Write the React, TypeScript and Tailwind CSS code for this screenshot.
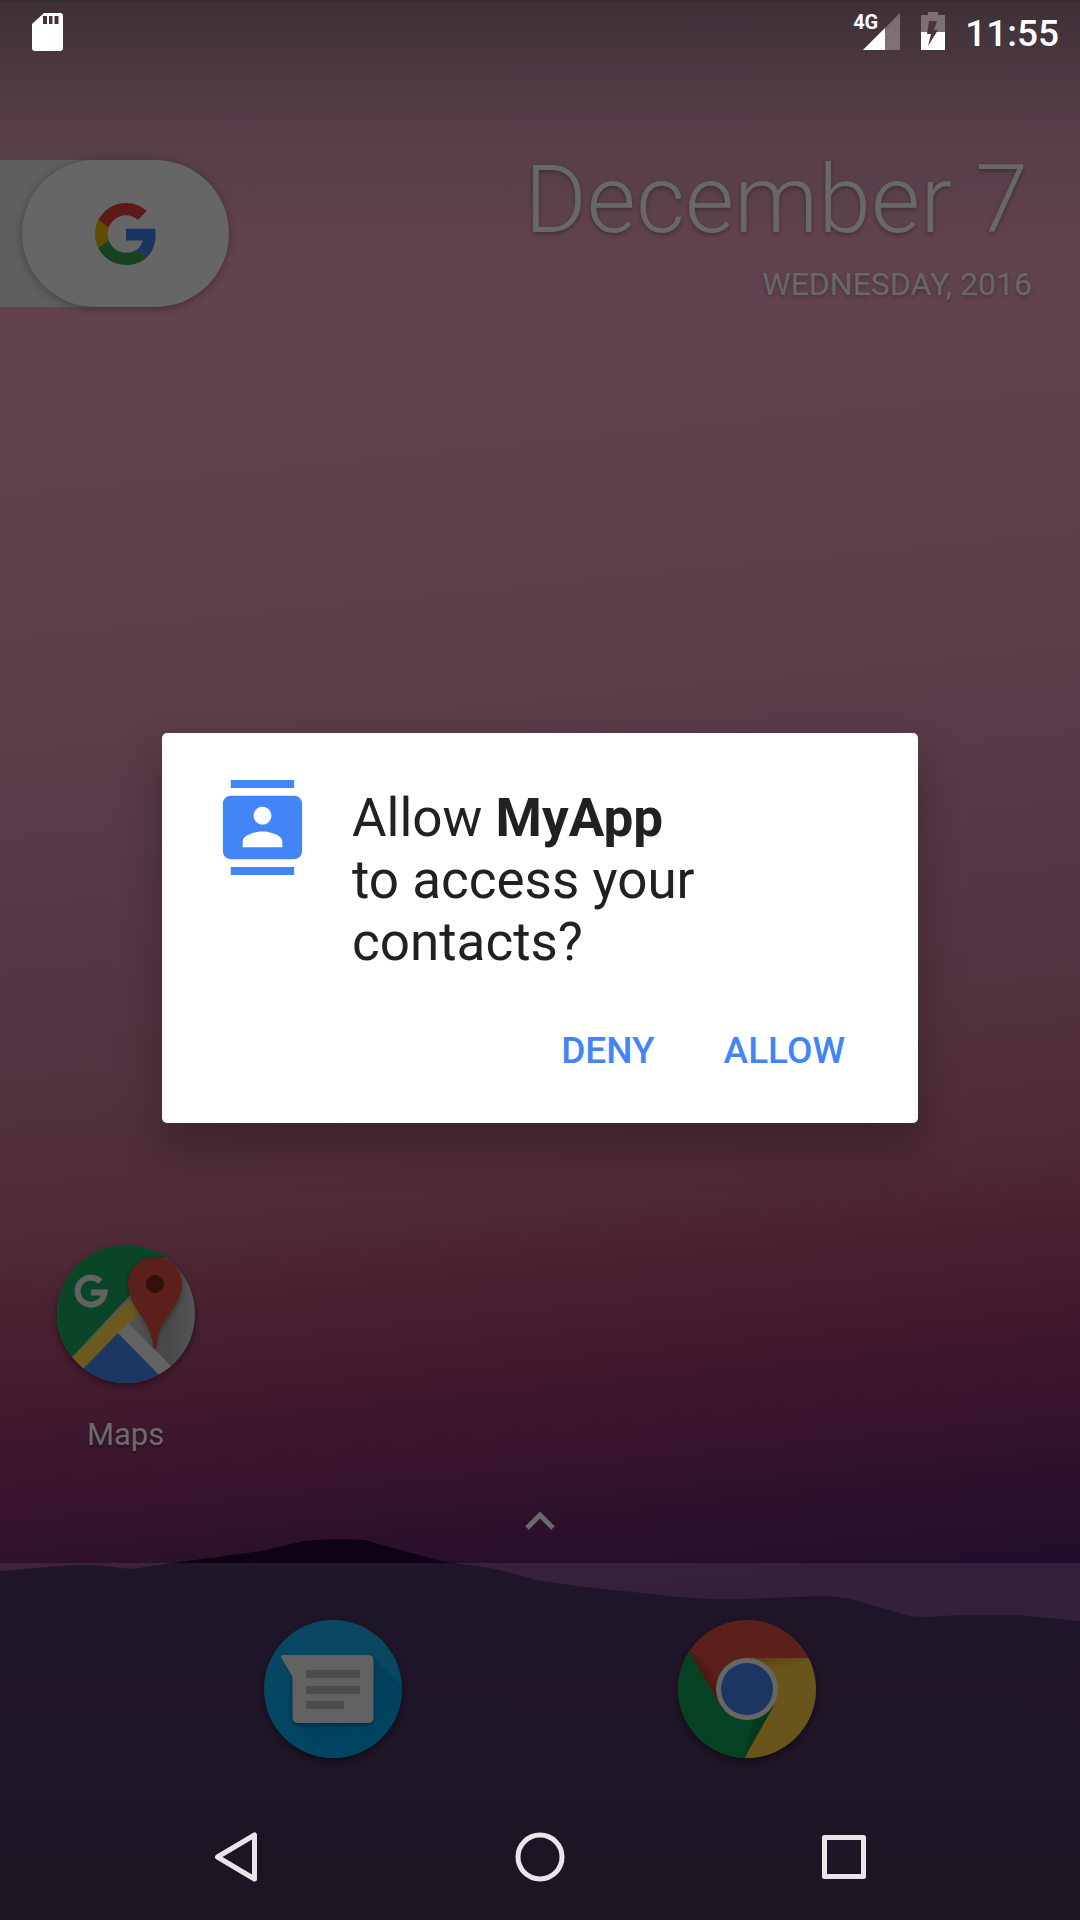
import React from "react";

function Wallpaper() {
  return (
    <svg
      className="absolute inset-0 h-full w-full"
      viewBox="0 0 1080 1920"
      preserveAspectRatio="none"
      aria-hidden="true"
    >
      <defs>
        <linearGradient id="sky" gradientUnits="userSpaceOnUse" x1="460" y1="0" x2="620" y2="1600">
          <stop offset="0" stopColor="#62434e" />
          <stop offset="0.2" stopColor="#61434f" />
          <stop offset="0.33" stopColor="#5e404a" />
          <stop offset="0.5" stopColor="#583947" />
          <stop offset="0.65" stopColor="#52323f" />
          <stop offset="0.74" stopColor="#4f2b38" />
          <stop offset="0.8" stopColor="#471f2f" />
          <stop offset="0.86" stopColor="#3f182d" />
          <stop offset="0.91" stopColor="#36142c" />
          <stop offset="0.96" stopColor="#29102b" />
          <stop offset="1" stopColor="#220e2a" />
        </linearGradient>
        <linearGradient id="topShade" x1="0" y1="0" x2="0" y2="1">
          <stop offset="0" stopColor="#1c1d20" stopOpacity="0.52" />
          <stop offset="0.5" stopColor="#2c2a30" stopOpacity="0.24" />
          <stop offset="1" stopColor="#2c2a30" stopOpacity="0" />
        </linearGradient>
        <linearGradient id="hill" gradientUnits="userSpaceOnUse" x1="0" y1="1540" x2="0" y2="1920">
          <stop offset="0" stopColor="#0e0217" />
          <stop offset="0.3" stopColor="#0c0216" />
          <stop offset="1" stopColor="#09020f" />
        </linearGradient>
      </defs>
      <rect width="1080" height="1920" fill="url(#sky)" />
      <rect width="1080" height="260" fill="url(#topShade)" />
      <rect width="1080" height="2" fill="#352b31" />
      <path
        fill="url(#hill)"
        d="M0 1571 L59 1566 Q85 1564 103 1566 L131 1569 L172 1563 L262 1551 L303 1541 Q335 1538 365 1540 L393 1548 L441 1561 L496 1569 L537 1580 L585 1587 L661 1595 Q700 1600 744 1599 L820 1596 Q838 1596 854 1600 L900 1613 Q910 1617 925 1617 L960 1615 L1019 1615 L1080 1621 V1920 H0 Z"
      />
    </svg>
  );
}

function SdCardIcon() {
  return (
    <svg className="h-10 w-8" viewBox="0 0 32 40" aria-label="SD card">
      <path
        fillRule="evenodd"
        fill="#fff"
        d="M12 1 H28 Q31 1 31 4 V36 Q31 39 28 39 H3 Q0 39 0 36 V12 Z M11 4 V12 H15 V4 Z M17 4 V12 H20.500 V4 Z M22.500 4 V12 H26.500 V4 Z"
      />
    </svg>
  );
}

function SignalIcon() {
  return (
    <div className="relative h-10 w-12">
      <svg className="absolute inset-0 h-10 w-12" viewBox="0 0 48 40" aria-hidden="true">
        <path d="M47 1 V38 H10 Z" fill="#fff" fillOpacity="0.3" />
        <path d="M32 16 V38 H10 Z" fill="#fff" />
      </svg>
      <span className="absolute top-0 left-0 text-[20px] leading-5 font-bold text-white">4G</span>
    </div>
  );
}

function BatteryIcon() {
  return (
    <svg className="h-10 w-6" viewBox="0 0 24 40" aria-label="Battery charging">
      <path d="M7 0 H17 V3 H24 V20 H0 V3 H7 Z" fill="#fff" fillOpacity="0.3" />
      <path d="M0 20 H24 V38 H0 Z" fill="#fff" />
      <path d="M8 9 H16 L13 18 H17 L7 34 L10 22 H6 Z" fill="#4a353e" />
    </svg>
  );
}

function GoogleG() {
  return (
    <svg className="h-[62px] w-[62px]" viewBox="0 0 48 48" aria-label="Google">
      <path fill="#5e1b16" d="M24 9.500c3.540 0 6.710 1.220 9.210 3.600l6.850-6.850C35.900 2.380 30.470 0 24 0 14.620 0 6.510 5.380 2.560 13.220l7.980 6.190C12.430 13.720 17.740 9.500 24 9.500z" />
      <path fill="#1b3563" d="M46.980 24.550c0-1.570-.15-3.090-.38-4.550H24v9.020h12.940c-.58 2.960-2.260 5.480-4.780 7.180l7.730 6c4.510-4.180 7.090-10.360 7.090-17.650z" />
      <path fill="#644b02" d="M10.530 28.590c-.48-1.450-.76-2.990-.76-4.590s.27-3.140.76-4.590l-7.980-6.190C.92 16.460 0 20.120 0 24c0 3.880.92 7.540 2.560 10.780l7.970-6.190z" />
      <path fill="#154322" d="M24 48c6.480 0 11.930-2.130 15.890-5.810l-7.730-6c-2.150 1.450-4.920 2.300-8.160 2.300-6.260 0-11.570-4.220-13.470-9.910l-7.980 6.190C6.510 42.620 14.620 48 24 48z" />
    </svg>
  );
}

function MapsIcon() {
  return (
    <svg className="h-[138px] w-[138px] drop-shadow-[0_3px_3px_rgba(0,0,0,0.4)]" viewBox="1 1 138 138" aria-hidden="true">
      <defs>
        <clipPath id="mapsClip">
          <circle cx="70" cy="70" r="69" />
        </clipPath>
        <linearGradient id="mapsGrey" x1="0" y1="0" x2="1" y2="0">
          <stop offset="0.450" stopColor="#565656" />
          <stop offset="0.800" stopColor="#484848" />
          <stop offset="1" stopColor="#565656" />
        </linearGradient>
        <filter id="pinShadow" x="-30%" y="-30%" width="160%" height="160%">
          <feGaussianBlur stdDeviation="3" />
        </filter>
      </defs>
      <g clipPath="url(#mapsClip)">
        <rect width="140" height="140" fill="url(#mapsGrey)" />
        <path d="M0 0 H122 L17 112 L0 130 Z" fill="#0b4527" />
        <path d="M7 123 L84 46 L94 58 L20 132 Z" fill="#6a5a1f" />
        <path d="M28 124 L62 89 L106 133 V140 H28 Z" fill="#1d3765" />
        <path d="M62 89 L72 79 L117 124 L106 134 Z" fill="#626262" />
        <path
          d="M99 106 C97 90 92 82 84 71 C78 62 72 52 72 42 A27 27 0 0 1 126 42 C126 52 120 62 114 71 C106 82 101 90 99 106 Z"
          fill="#000"
          fillOpacity="0.35"
          filter="url(#pinShadow)"
        />
      </g>
      <path
        d="M99 105 Q97 105 97 102 C96 88 90 79 84 70 C78 61 72 51 72 40 A27 27 0 0 1 126 40 C126 51 120 60 114 69 C107 79 102 88 101 102 Q101 105 99 105 Z"
        fill="#5b201a"
      />
      <circle cx="99" cy="40" r="9" fill="#34100d" />
      <path d="M44.500 37.500 A13.500 13.500 0 1 0 48.500 48.500 H35" fill="none" stroke="#626262" strokeWidth="6" />
    </svg>
  );
}

function MessagesIcon() {
  return (
    <svg className="h-[138px] w-[138px] drop-shadow-[0_3px_3px_rgba(0,0,0,0.4)]" viewBox="1 1 138 138" aria-hidden="true">
      <defs>
        <clipPath id="msgClip">
          <circle cx="70" cy="70" r="69" />
        </clipPath>
        <linearGradient id="msgBlue" x1="0" y1="0" x2="0" y2="1">
          <stop offset="0" stopColor="#0b4762" />
          <stop offset="1" stopColor="#014564" />
        </linearGradient>
        <linearGradient id="msgLong" gradientUnits="userSpaceOnUse" x1="90" y1="70" x2="115" y2="130">
          <stop offset="0" stopColor="#02405c" />
          <stop offset="1" stopColor="#014461" />
        </linearGradient>
        <filter id="bubbleShadow" x="-20%" y="-20%" width="140%" height="140%">
          <feGaussianBlur stdDeviation="2" />
        </filter>
      </defs>
      <g clipPath="url(#msgClip)">
        <rect width="140" height="140" fill="url(#msgBlue)" />
        <path d="M109 37 L149 77 V149 H73 L31 103 Z" fill="url(#msgLong)" />
        <path d="M20 39 H105 Q110 39 110 44 V101 Q110 106 105 106 H34 Q29 106 29 101 V60 Z" fill="#000" fillOpacity="0.350" filter="url(#bubbleShadow)" />
      </g>
      <path d="M20 36 H105 Q110.500 36 110.500 41 V98 Q110.500 104 105 104 H35 Q29.500 104 29.500 98 V58 L19 40 Q17 36 20 36 Z" fill="#626262" />
      <path d="M43 51 H97 V59 H43 Z M43 67 H97 V75 H43 Z M43 82 H81 V90 H43 Z" fill="#4c4c4c" />
    </svg>
  );
}

function ChromeIcon() {
  return (
    <svg className="h-[138px] w-[138px] drop-shadow-[0_3px_3px_rgba(0,0,0,0.4)]" viewBox="1 1 138 138" aria-hidden="true">
      <defs>
        <clipPath id="chromeClip">
          <circle cx="70" cy="70" r="69" />
        </clipPath>
        <linearGradient id="redShade" gradientUnits="userSpaceOnUse" x1="26" y1="60" x2="38" y2="52">
          <stop offset="0" stopColor="#4a140f" />
          <stop offset="1" stopColor="#4a140f" stopOpacity="0" />
        </linearGradient>
        <linearGradient id="yellowShade" gradientUnits="userSpaceOnUse" x1="90" y1="38" x2="93" y2="52">
          <stop offset="0" stopColor="#58430f" />
          <stop offset="1" stopColor="#58430f" stopOpacity="0" />
        </linearGradient>
        <linearGradient id="greenShade" gradientUnits="userSpaceOnUse" x1="84" y1="109" x2="72" y2="103">
          <stop offset="0" stopColor="#03351b" />
          <stop offset="1" stopColor="#03351b" stopOpacity="0" />
        </linearGradient>
      </defs>
      <g clipPath="url(#chromeClip)">
        <rect width="140" height="140" fill="#5b201a" />
        <path d="M0 10 L12.500 33 L43 86 L97 86 L67 140 H0 Z" fill="#054224" />
        <path d="M70 39 H140 V140 H67 L97 86 Z" fill="#69541b" />
        <path d="M12.500 33 L40 80 L50 50 Z" fill="url(#redShade)" />
        <path d="M70 39 H132 L98 54 Z" fill="url(#yellowShade)" />
        <path d="M97 86 L67 139 L76 98 Z" fill="url(#greenShade)" />
      </g>
      <circle cx="70" cy="70" r="31" fill="#666" />
      <circle cx="70" cy="70" r="26" fill="#1c3562" />
    </svg>
  );
}

function ContactsIcon() {
  return (
    <svg className="h-[95px] w-[95px] shrink-0" viewBox="0 0 24 24" aria-hidden="true">
      <path
        fill="#4285f6"
        d="M20 0H4v2h16V0zM4 24h16v-2H4v2zM20 4H4c-1.100 0-2 .9-2 2v12c0 1.100.9 2 2 2h16c1.100 0 2-.9 2-2V6c0-1.100-.9-2-2-2zm-8 2.750c1.240 0 2.250 1.010 2.250 2.250s-1.010 2.250-2.250 2.250S9.750 10.240 9.750 9 10.760 6.750 12 6.750zM17 17H7v-1.500c0-1.670 3.330-2.500 5-2.500s5 .83 5 2.500V17z"
      />
    </svg>
  );
}

function PermissionDialog() {
  return (
    <div className="absolute inset-0 flex items-center justify-center pt-2 pb-[72px]">
      <section
        role="dialog"
        aria-modal="true"
        aria-labelledby="permission-title"
        className="w-[70%] rounded-[5px] bg-white px-[53px] pt-[47px] pb-[22px] shadow-[0_24px_40px_4px_rgba(0,0,0,0.24)]"
      >
        <div className="flex gap-[42px]">
          <ContactsIcon />
          <h1 id="permission-title" className="pt-[7px] text-[53px] leading-[62px] text-[#212121]">
            Allow <b className="font-bold">MyApp</b>
            <br />
            to access your
            <br />
            contacts?
          </h1>
        </div>
        <div className="mt-7 flex justify-end gap-[29px]">
          <button type="button" className="h-[100px] px-5 text-[37px] font-medium text-[#4285f6]">
            DENY
          </button>
          <button type="button" className="h-[100px] px-5 text-[37px] font-medium text-[#4285f6]">
            ALLOW
          </button>
        </div>
      </section>
    </div>
  );
}

export default function App() {
  return (
    <div className="relative flex min-h-screen flex-col overflow-hidden bg-[#3a152b] font-['Roboto',sans-serif]">
      <Wallpaper />

      <header className="relative flex h-16 items-center justify-between pr-[21px] pl-8">
        <SdCardIcon />
        <div className="flex items-center">
          <SignalIcon />
          <span className="ml-5">
            <BatteryIcon />
          </span>
          <time className="ml-5 pt-[3px] text-[37px] leading-10 font-medium text-white">11:55</time>
        </div>
      </header>

      <main className="relative flex flex-1 flex-col">
        <div className="mt-24 flex items-start justify-between pr-12">
          <div className="w-[229px] bg-[linear-gradient(90deg,#5f5f5f_50%,transparent_50%)] pl-[22px]">
            <button
              type="button"
              aria-label="Google search"
              className="flex h-[147px] w-full items-center justify-center rounded-full bg-[#666] shadow-[0_2px_8px_rgba(0,0,0,0.3)]"
            >
              <GoogleG />
            </button>
          </div>
          <div className="text-right text-[#686868] [text-shadow:0_2px_4px_rgba(0,0,0,0.3)]">
            <p className="pr-1 text-[95px] leading-[80px] font-light">December 7</p>
            <p className="mt-6 text-[32px] leading-10">WEDNESDAY, 2016</p>
          </div>
        </div>

        <div className="mt-auto grid grid-cols-5 px-[22px]">
          <a href="#maps" className="flex flex-col items-center">
            <MapsIcon />
            <span className="mt-8 text-[31px] leading-10 text-[#6c6c6c] [text-shadow:0_2px_3px_rgba(0,0,0,0.4)]">Maps</span>
          </a>
        </div>

        <button type="button" aria-label="Show all apps" className="mt-10 flex h-[68px] items-start justify-center pt-4">
          <svg className="h-5 w-8" viewBox="0 0 32 20" aria-hidden="true">
            <path d="M3 17 L16 4 L29 17" fill="none" stroke="#6a6a6a" strokeWidth="5" />
          </svg>
        </button>
      </main>

      <footer className="relative bg-white/8">
        <div className="grid grid-cols-5 px-[22px] pt-[57px] pb-9">
          <a href="#messages" aria-label="Messages" className="col-start-2 flex justify-center">
            <MessagesIcon />
          </a>
          <a href="#chrome" aria-label="Chrome" className="col-start-4 flex justify-center">
            <ChromeIcon />
          </a>
        </div>
        <nav className="flex h-[126px] items-center justify-center gap-[248px]">
          <button type="button" aria-label="Back">
            <svg className="h-14 w-14" viewBox="0 0 56 56" fill="none" stroke="#e8e6e8" strokeWidth="5" strokeLinejoin="round" aria-hidden="true">
              <path d="M46.500 6 V50 L9.500 28 Z" />
            </svg>
          </button>
          <button type="button" aria-label="Home">
            <svg className="h-14 w-14" viewBox="0 0 56 56" fill="none" stroke="#e8e6e8" strokeWidth="5" aria-hidden="true">
              <circle cx="28" cy="28" r="22" />
            </svg>
          </button>
          <button type="button" aria-label="Recent apps">
            <svg className="h-14 w-14" viewBox="0 0 56 56" fill="none" stroke="#e8e6e8" strokeWidth="5" strokeLinejoin="round" aria-hidden="true">
              <rect x="8.500" y="8.500" width="39" height="39" />
            </svg>
          </button>
        </nav>
      </footer>

      <PermissionDialog />
    </div>
  );
}
